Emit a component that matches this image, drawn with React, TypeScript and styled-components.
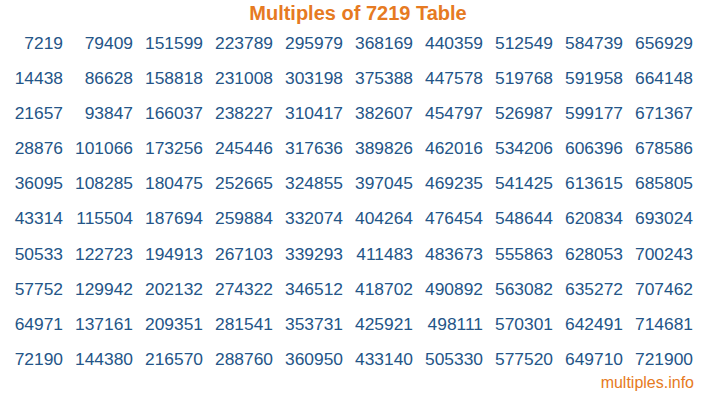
import React from 'react';
import styled, { createGlobalStyle } from 'styled-components';

const GlobalStyle = createGlobalStyle`
  html, body {
    margin: 0;
    padding: 0;
    background: #ffffff;
    font-family: "Liberation Sans", Arial, sans-serif;
  }
`;

const Page = styled.div`
  width: 716px;
  height: 400px;
  overflow: hidden;
  display: flex;
  flex-direction: column;
`;

const Title = styled.h1`
  margin: 0;
  padding-top: 2px;
  height: 24px;
  line-height: 22px;
  text-align: center;
  font-size: 20px;
  font-weight: bold;
  color: #e67a22;
`;

const Grid = styled.div`
  display: grid;
  grid-template-columns: repeat(10, 70px);
  grid-auto-rows: 35.08px;
  width: 700px;
  margin-left: -1px;
`;

const Cell = styled.div`
  display: flex;
  align-items: center;
  justify-content: flex-end;
  padding-right: 6px;
  font-size: 17.4px;
  color: #245587;
`;

const Footer = styled.div`
  text-align: right;
  padding-right: 22px;
  margin-top: -3px;
  font-size: 16px;
  line-height: 18px;
  color: #e67a22;
`;

const BASE = 7219;

export default function App() {
  const rows = Array.from({ length: 10 }, (_, r) => r);
  const cols = Array.from({ length: 10 }, (_, c) => c);
  return (
    <Page>
      <GlobalStyle />
      <Title>Multiples of {BASE} Table</Title>
      <Grid>
        {rows.map((r) =>
          cols.map((c) => (
            <Cell key={`${r}-${c}`}>{BASE * (c * 10 + r + 1)}</Cell>
          ))
        )}
      </Grid>
      <Footer>multiples.info</Footer>
    </Page>
  );
}
